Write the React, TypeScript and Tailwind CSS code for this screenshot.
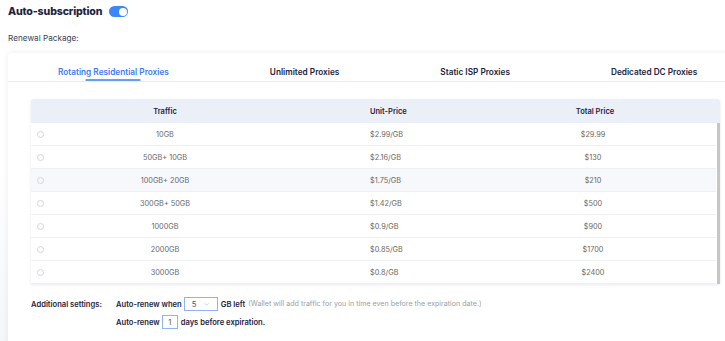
import { ChevronDown } from 'lucide-react';

const rows = [
  { traffic: '10GB', unit: '$2.99/GB', total: '$29.99' },
  { traffic: '50GB+ 10GB', unit: '$2.16/GB', total: '$130' },
  { traffic: '100GB+ 20GB', unit: '$1.75/GB', total: '$210' },
  { traffic: '300GB+ 50GB', unit: '$1.42/GB', total: '$500' },
  { traffic: '1000GB', unit: '$0.9/GB', total: '$900' },
  { traffic: '2000GB', unit: '$0.85/GB', total: '$1700' },
  { traffic: '3000GB', unit: '$0.8/GB', total: '$2400' },
];

const tabs = ['Rotating Residential Proxies', 'Unlimited Proxies', 'Static ISP Proxies', 'Dedicated DC Proxies'];

export default function App() {
  return (
    <div
      className="w-[725px] h-[341px] overflow-hidden bg-gradient-to-b from-white via-white to-[#f4f6fa] text-[#1d2340]"
      style={{ fontFamily: 'Inter, "Noto Sans", sans-serif' }}
    >
      <div className="px-2">
        <div className="flex items-center h-[22px] pt-[1px]">
          <h1 className="text-[10.6px] font-extrabold tracking-[-0.15px]">Auto-subscription</h1>
          <div className="ml-[7px] w-[19px] h-[11px] rounded-full bg-[#3d86f5] relative">
            <div className="absolute right-[1.5px] top-[1.5px] w-[8px] h-[8px] rounded-full bg-white" />
          </div>
        </div>
        <div className="mt-[10px] text-[8.2px] text-[#3a3f55]">Renewal Package:</div>
      </div>

      <div className="mt-[9px] ml-2 w-[740px] h-[300px] bg-white rounded-tl-[4px] shadow-[0_0_6px_rgba(30,40,80,0.08)]">
        <div className="flex h-[29px] border-b border-[#e8ebf2] pl-[50px] gap-[101px]">
          {tabs.map((t, i) => (
            <div key={t} className="relative flex items-center pt-[9px]">
              <span
                className={
                  'text-[8.25px] font-semibold whitespace-nowrap ' +
                  (i === 0 ? 'text-[#3a7cf5]' : 'text-[#1d2340]')
                }
              >
                {t}
              </span>
              {i === 0 && (
                <div className="absolute bottom-[0px] left-1/2 -translate-x-1/2 w-[55px] h-[2px] bg-[#6d9cf5]" />
              )}
            </div>
          ))}
        </div>

        <div className="ml-[23px] mt-[17px] w-[689px] rounded-t-[3px] shadow-[0_1px_3px_rgba(30,40,80,0.1)] relative">
          <div className="grid grid-cols-[29px_210px_200px_1fr] h-[24px] items-center bg-[#eaeff8] text-[7.5px] font-semibold text-[#1d2340] rounded-t-[3px]">
            <div />
            <div className="text-center">Traffic</div>
            <div className="pl-[100px]">Unit-Price</div>
            <div className="text-center">Total Price</div>
          </div>
          <div className="pr-[4px]">
            {rows.map((r, i) => (
              <div
                key={r.traffic}
                className={
                  'grid grid-cols-[29px_210px_200px_1fr] h-[23px] items-center text-[7.3px] text-[#666a72] border-b border-[#eef0f4] ' +
                  (i === 2 ? 'bg-[#f6f8fc]' : 'bg-white')
                }
              >
                <div className="flex justify-start pl-[6px] pt-[1px]">
                  <div className="w-[7px] h-[7px] rounded-full border border-[#d4d6da]" />
                </div>
                <div className="text-center pt-[2px]">{r.traffic}</div>
                <div className="pl-[100px] pt-[2px] text-[#6e6760]">{r.unit}</div>
                <div className="text-center pt-[2px] text-[#6e6760]">{r.total}</div>
              </div>
            ))}
          </div>
          <div className="absolute right-0 top-[24px] bottom-0 w-[3px] bg-[#c6c6c6]" />
        </div>

        <div className="mt-[12px] ml-[23px] text-[7.6px] font-semibold">
          <div className="flex items-center h-[16px] mt-[1px]">
            <span className="w-[85px]">Additional settings:</span>
            <span>Auto-renew when</span>
            <div className="ml-[2px] w-[34px] h-[14px] border border-[#8fb4f5] flex items-center justify-between px-[7px] font-normal text-[#555]">
              <span>5</span>
              <ChevronDown className="w-[7px] h-[7px] text-[#b5b9c2]" strokeWidth={2} />
            </div>
            <span className="ml-[3px]">GB left</span>
            <span className="ml-[3px] text-[7.1px] font-normal text-[#9a9ea8]">
              (Wallet will add traffic for you in time even before the expiration date.)
            </span>
          </div>
          <div className="flex items-center h-[16px] mt-[2px] pl-[85px]">
            <span>Auto-renew</span>
            <div className="ml-[2px] w-[16px] h-[14px] border border-[#8fb4f5] flex items-center justify-center font-normal text-[#555]">
              1
            </div>
            <span className="ml-[3px]">days before expiration.</span>
          </div>
        </div>
      </div>
    </div>
  );
}
